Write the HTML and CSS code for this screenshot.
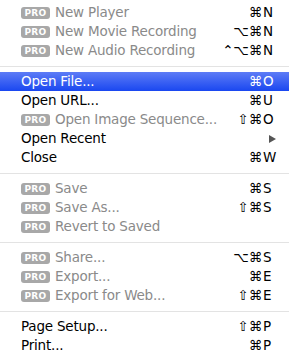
FILE: index.html
```html
<!DOCTYPE html>
<html>
<head>
<meta charset="utf-8">
<link rel="stylesheet" href="styles.css">
</head>
<body>
<div class="menu">
  <div class="item dis"><span class="label"><span class="pro">PRO</span>New Player</span><span class="mod">⌘</span><span class="key">N</span></div>
  <div class="item dis"><span class="label"><span class="pro">PRO</span>New Movie Recording</span><span class="mod">⌥⌘</span><span class="key">N</span></div>
  <div class="item dis"><span class="label"><span class="pro">PRO</span>New Audio Recording</span><span class="mod">⌃⌥⌘</span><span class="key">N</span></div>
  <div class="sep"></div>
  <div class="item sel"><span class="label">Open File...</span><span class="mod">⌘</span><span class="key">O</span></div>
  <div class="item"><span class="label">Open URL...</span><span class="mod">⌘</span><span class="key">U</span></div>
  <div class="item dis"><span class="label"><span class="pro">PRO</span>Open Image Sequence...</span><span class="mod">⇧⌘</span><span class="key">O</span></div>
  <div class="item"><span class="label">Open Recent</span><span class="mod"></span><span class="key"><span class="arrow"></span></span></div>
  <div class="item"><span class="label">Close</span><span class="mod">⌘</span><span class="key">W</span></div>
  <div class="sep"></div>
  <div class="item dis"><span class="label"><span class="pro">PRO</span>Save</span><span class="mod">⌘</span><span class="key">S</span></div>
  <div class="item dis"><span class="label"><span class="pro">PRO</span>Save As...</span><span class="mod">⇧⌘</span><span class="key">S</span></div>
  <div class="item dis"><span class="label"><span class="pro">PRO</span>Revert to Saved</span><span class="mod"></span><span class="key"></span></div>
  <div class="sep"></div>
  <div class="item dis"><span class="label"><span class="pro">PRO</span>Share...</span><span class="mod">⌥⌘</span><span class="key">S</span></div>
  <div class="item dis"><span class="label"><span class="pro">PRO</span>Export...</span><span class="mod">⌘</span><span class="key">E</span></div>
  <div class="item dis"><span class="label"><span class="pro">PRO</span>Export for Web...</span><span class="mod">⇧⌘</span><span class="key">E</span></div>
  <div class="sep"></div>
  <div class="item"><span class="label">Page Setup...</span><span class="mod">⇧⌘</span><span class="key">P</span></div>
  <div class="item"><span class="label">Print...</span><span class="mod">⌘</span><span class="key">P</span></div>
</div>
</body>
</html>
```
FILE: styles.css
```css
html, body {
  margin: 0;
  padding: 0;
  background: #ffffff;
}
.menu {
  width: 289px;
  height: 360px;
  padding-top: 3px;
  box-sizing: border-box;
  background: #ffffff;
  font-family: "DejaVu Sans", "Lucida Grande", sans-serif;
  font-size: 13.5px;
  letter-spacing: -0.2px;
  color: #000;
}
.item {
  height: 19px;
  display: grid;
  grid-template-columns: 1fr auto 27px;
  align-items: center;
  padding-left: 21px;
  line-height: 19px;
  white-space: nowrap;
}
.item.dis .label {
  color: #8a8a8a;
}
.item.sel {
  background: linear-gradient(#5d7cf6, #1a47f0);
  color: #fff;
}
.label {
  display: flex;
  align-items: center;
}
.pro {
  display: inline-block;
  width: 29px;
  height: 12px;
  margin-right: 5px;
  background: #a8a8a8;
  color: #fff;
  border-radius: 3px;
  font-size: 9px;
  font-weight: bold;
  line-height: 12px;
  text-align: center;
  letter-spacing: 0.3px;
}
.mod {
  text-align: right;
}
.key {
  text-align: left;
  padding-left: 1px;
}
.arrow {
  display: inline-block;
  margin-left: 6px;
  width: 0;
  height: 0;
  border-top: 4.5px solid transparent;
  border-bottom: 4.5px solid transparent;
  border-left: 7px solid #555;
}
.sep {
  height: 12px;
  display: flex;
  align-items: center;
}
.sep::before {
  content: "";
  display: block;
  width: 100%;
  height: 1px;
  background: #e3e3e3;
}
```
